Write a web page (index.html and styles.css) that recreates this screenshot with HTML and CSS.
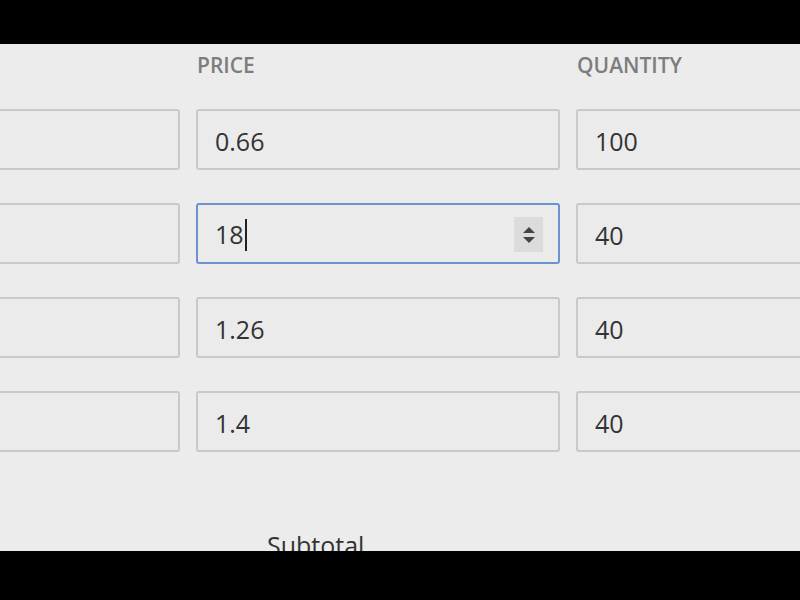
FILE: index.html
```html
<!DOCTYPE html>
<html>
<head>
<meta charset="utf-8">
<link rel="stylesheet" href="styles.css">
</head>
<body>
<div class="screen">
  <div class="table">
    <div class="label"></div>
    <div class="label">PRICE</div>
    <div class="label">QUANTITY</div>

    <div class="field"></div>
    <div class="field">0.66</div>
    <div class="field">100</div>

    <div class="field"></div>
    <div class="field focus"><span class="val">18</span><span class="caret"></span>
      <span class="spin">
        <svg width="16" height="24" viewBox="0 0 16 24"><path d="M8 4 L14 10 L2 10 Z" fill="#444"/><path d="M2 14 L14 14 L8 20 Z" fill="#444"/></svg>
      </span>
    </div>
    <div class="field">40</div>

    <div class="field"></div>
    <div class="field">1.26</div>
    <div class="field">40</div>

    <div class="field"></div>
    <div class="field">1.4</div>
    <div class="field">40</div>
  </div>
  <div class="subtotal">Subtotal</div>
</div>
</body>
</html>
```
FILE: styles.css
```css
html, body {
  margin: 0;
  padding: 0;
  background: #000;
  width: 800px;
  height: 600px;
  overflow: hidden;
}
.screen {
  margin-top: 44px;
  height: 507px;
  background: #ececec;
  overflow: hidden;
  font-family: "Open Sans", "Noto Sans", sans-serif;
  color: #333;
}
.table {
  display: grid;
  grid-template-columns: 220px 364px 260px;
  column-gap: 16px;
  row-gap: 33px;
  margin-left: -40px;
  padding-top: 10px;
}
.label {
  font-size: 21px;
  font-weight: 600;
  color: #7d7d7d;
  height: 22px;
  line-height: 22px;
  padding-left: 1px;
}
.field {
  box-sizing: border-box;
  height: 61px;
  border: 2px solid #c9c9c9;
  border-radius: 3px;
  background: #ebebeb;
  font-size: 25px;
  line-height: 57px;
  padding-left: 17px;
  padding-top: 3px;
  display: flex;
  align-items: center;
}
.focus {
  border-color: #6b93cf;
  padding-top: 2px;
}
.caret {
  display: inline-block;
  width: 2px;
  height: 32px;
  background: #222;
  margin-left: 1px;
}
.spin {
  margin-left: auto;
  margin-right: 15px;
  width: 29px;
  height: 35px;
  background: #dcdcdc;
  display: flex;
  align-items: center;
  justify-content: center;
}
.spin svg { display: block; }
.subtotal {
  margin-top: 78px;
  margin-left: 267px;
  font-size: 25px;
  line-height: 30px;
  color: #333;
}
```
